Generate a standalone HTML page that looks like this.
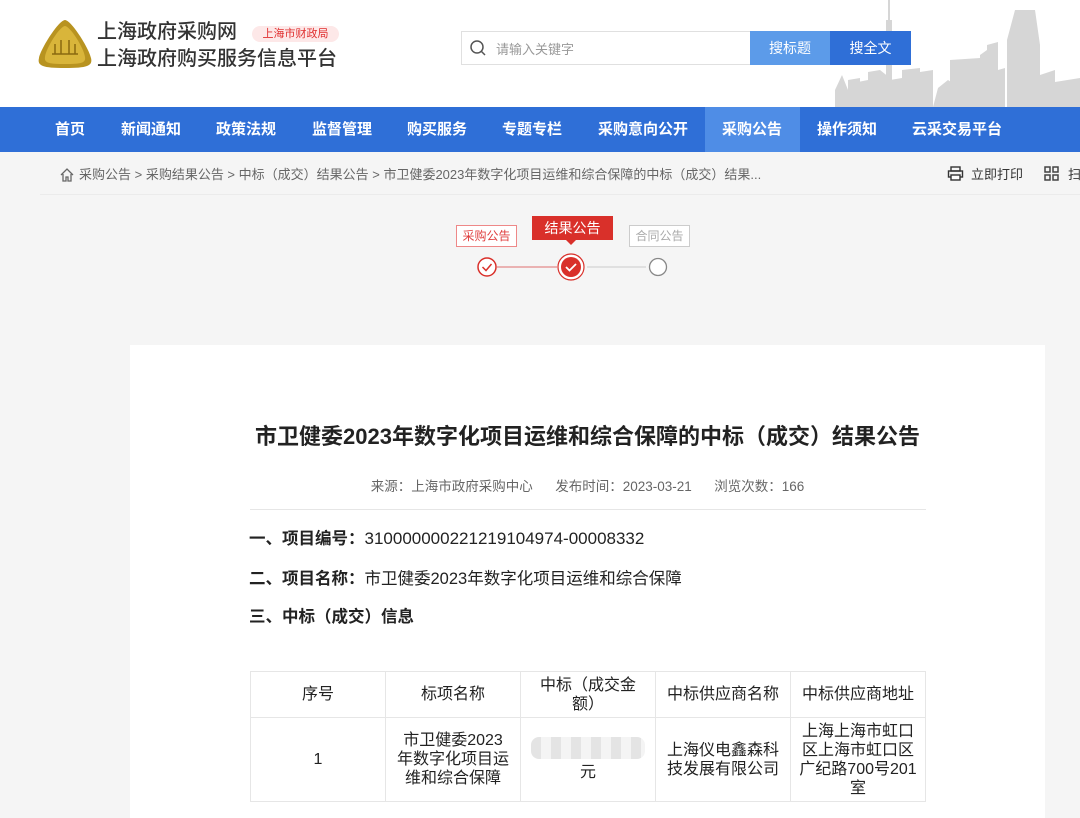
<!DOCTYPE html>
<html><head><meta charset="utf-8"><style>
*{margin:0;padding:0;box-sizing:border-box}
body{width:1080px;height:818px;overflow:hidden;background:#f5f5f5;font-family:"Liberation Sans","Noto Sans CJK SC",sans-serif;color:#222;position:relative}
.a{position:absolute;white-space:nowrap}
.nav{position:absolute;left:0;top:107px;width:1080px;height:45px;background:#2f6fd7}
.nav span{position:absolute;top:0;height:45px;line-height:45px;color:#fff;font-size:15px;font-weight:bold;transform:translateX(-50%)}
table{border-collapse:collapse;position:absolute;left:250px;top:671px;width:676px;background:#fff;table-layout:fixed}
td{border:1px solid #e6e6e6;text-align:center;font-size:16px;width:135px;padding:0 10px;line-height:19px;color:#222}
</style></head><body>
<div class="a" style="left:0;top:0;width:1080px;height:107px;background:#fff"></div>
<svg class="a" style="left:830px;top:0" width="250" height="107" viewBox="0 0 250 107"><g fill="#d6d6d6">
<rect x="58" y="0" width="2" height="20"/><rect x="56" y="20" width="6" height="87"/>
<path d="M5 107V90L12 75L18 90V80L30 78V107ZM28 107V82L38 80V72L50 70L60 78V107ZM60 107V80L72 78V70L90 68V107ZM90 107V72L103 70V107ZM103 107L108 88L118 80L130 88V107ZM120 107V60L150 58V107ZM150 107V55L157 50V45L168 42V107ZM168 107V70L175 68V107ZM177 107V40L185 10H205L210 45V107ZM210 107V75L225 70V107ZM225 107V82L250 78V107Z"/></g></svg>
<svg class="a" style="left:37px;top:18px" width="56" height="52" viewBox="0 0 56 52"><path d="M28 2C34 2 52 30 54 40C56 48 50 50 28 50C6 50 0 48 2 40C4 30 22 2 28 2Z" fill="#b89320"/><path d="M28 8C33 8 47 30 48 39C49 45 44 46 28 46C12 46 7 45 8 39C9 30 23 8 28 8Z" fill="#d9b53a"/><g stroke="#8a6a10" stroke-width="1.5" fill="none"><path d="M15 36H41M18 36V26M24 36V22M32 36V22M38 36V26"/></g></svg>
<div class="a" style="left:97px;top:20px;font-size:20px;color:#333;line-height:24px;font-weight:500">上海政府采购网</div>
<div class="a" style="left:252px;top:26px;width:87px;height:16px;border-radius:8px;background:#fde8e8;color:#e03030;font-size:11px;line-height:16px;text-align:center">上海市财政局</div>
<div class="a" style="left:97px;top:46px;font-size:20px;color:#333;line-height:26px;font-weight:500">上海政府购买服务信息平台</div>
<div class="a" style="left:461px;top:31px;width:290px;height:34px;border:1px solid #e0e0e0;background:#fff"></div>
<svg class="a" style="left:469px;top:39px" width="18" height="18" viewBox="0 0 18 18"><circle cx="8" cy="8" r="6" stroke="#555" stroke-width="1.5" fill="none"/><path d="M12.5 12.5L16 16" stroke="#555" stroke-width="1.5"/></svg>
<div class="a" style="left:496px;top:39px;font-size:13px;color:#999">请输入关键字</div>
<div class="a" style="left:750px;top:31px;width:80px;height:34px;background:#5c9be9;color:#fff;font-size:14px;line-height:34px;text-align:center">搜标题</div>
<div class="a" style="left:830px;top:31px;width:81px;height:34px;background:#2f6fd7;color:#fff;font-size:14px;line-height:34px;text-align:center">搜全文</div>
<div class="nav">
<div class="a" style="left:705px;top:0;width:95px;height:45px;background:#4f8de6"></div>
<span style="left:70px">首页</span><span style="left:151px">新闻通知</span><span style="left:246px">政策法规</span><span style="left:342px">监督管理</span><span style="left:437px">购买服务</span><span style="left:532px">专题专栏</span><span style="left:643px">采购意向公开</span><span style="left:752px">采购公告</span><span style="left:847px">操作须知</span><span style="left:957px">云采交易平台</span>
</div>
<svg class="a" style="left:59px;top:167px" width="16" height="16" viewBox="0 0 16 16"><path d="M2 8L8 2L14 8M4 7V14H7V10H9V14H12V7" stroke="#666" stroke-width="1.3" fill="none"/></svg>
<div class="a" style="left:79px;top:166px;font-size:13px;color:#666;line-height:18px">采购公告 &gt; 采购结果公告 &gt; 中标（成交）结果公告 &gt; 市卫健委2023年数字化项目运维和综合保障的中标（成交）结果...</div>
<svg class="a" style="left:947px;top:165px" width="17" height="17" viewBox="0 0 17 17"><g stroke="#333" stroke-width="1.4" fill="none"><rect x="4" y="2" width="9" height="4"/><rect x="1.5" y="6" width="14" height="6"/><rect x="4" y="10" width="9" height="5" fill="#fff"/></g></svg>
<div class="a" style="left:971px;top:166px;font-size:13px;color:#333;line-height:18px">立即打印</div>
<svg class="a" style="left:1044px;top:166px" width="15" height="15" viewBox="0 0 15 15"><g fill="none" stroke="#444" stroke-width="1.5"><rect x="1" y="1" width="5" height="5"/><rect x="9" y="1" width="5" height="5"/><rect x="1" y="9" width="5" height="5"/><rect x="9" y="9" width="5" height="5"/></g></svg>
<div class="a" style="left:1068px;top:166px;font-size:13px;color:#333;line-height:18px">扫</div>
<div class="a" style="left:40px;top:194px;width:1040px;height:1px;background:#ebebeb"></div>
<div class="a" style="left:456px;top:225px;width:61px;height:22px;border:1px solid #e88;color:#e04040;font-size:12px;line-height:20px;text-align:center;background:#fff">采购公告</div>
<div class="a" style="left:532px;top:216px;width:81px;height:24px;background:#d9302a;color:#fff;font-size:14px;line-height:24px;text-align:center">结果公告</div>
<div class="a" style="left:566px;top:240px;width:0;height:0;border-left:5px solid transparent;border-right:5px solid transparent;border-top:5px solid #d9302a"></div>
<div class="a" style="left:629px;top:225px;width:61px;height:22px;border:1px solid #ccc;color:#aaa;font-size:12px;line-height:20px;text-align:center;background:#fff">合同公告</div>
<svg class="a" style="left:470px;top:252px" width="200" height="30" viewBox="0 0 200 30"><line x1="27" y1="15" x2="87" y2="15" stroke="#e07070" stroke-width="1"/><line x1="117" y1="15" x2="176" y2="15" stroke="#ccc"/><circle cx="17" cy="15" r="9" fill="#fff" stroke="#d9302a" stroke-width="1.5"/><path d="M12.5 15L16 18.5L21.5 12" stroke="#d9302a" stroke-width="1.5" fill="none"/><circle cx="101" cy="15" r="13" fill="#fff" stroke="#d9302a" stroke-width="1.2"/><circle cx="101" cy="15" r="10" fill="#d9302a"/><path d="M96 15L99.5 18.5L106 12" stroke="#fff" stroke-width="1.8" fill="none"/><circle cx="188" cy="15" r="8.5" fill="#fff" stroke="#888" stroke-width="1.3"/></svg>
<div class="a" style="left:130px;top:345px;width:915px;height:473px;background:#fff"></div>
<div class="a" style="left:130px;top:422px;width:915px;text-align:center;font-size:22px;font-weight:bold;color:#222;line-height:30px">市卫健委2023年数字化项目运维和综合保障的中标（成交）结果公告</div>
<div class="a" style="left:130px;top:478px;width:915px;text-align:center;font-size:13.5px;color:#666;line-height:18px">来源：上海市政府采购中心&nbsp;&nbsp;&nbsp;&nbsp;&nbsp;&nbsp;发布时间：2023-03-21&nbsp;&nbsp;&nbsp;&nbsp;&nbsp;&nbsp;浏览次数：166</div>
<div class="a" style="left:250px;top:509px;width:676px;height:1px;background:#e6e6e6"></div>
<div class="a" style="left:249px;top:528px;font-size:16.5px;line-height:22px"><b>一、项目编号：</b><span style="font-size:17px">310000000221219104974-00008332</span></div>
<div class="a" style="left:249px;top:568px;font-size:16.5px;line-height:22px"><b>二、项目名称：</b>市卫健委2023年数字化项目运维和综合保障</div>
<div class="a" style="left:249px;top:606px;font-size:16.5px;line-height:22px"><b>三、中标（成交）信息</b></div>
<table>
<tr style="height:46px"><td>序号</td><td>标项名称</td><td>中标（成交金额）</td><td style="padding:0 4px">中标供应商名称</td><td style="padding:0 4px">中标供应商地址</td></tr>
<tr style="height:84px"><td>1</td><td>市卫健委2023年数字化项目运维和综合保障</td><td><div style="height:22px;margin:0 0 4px;background:repeating-linear-gradient(90deg,#e4e4e4 0 10px,#f4f4f4 10px 20px);border-radius:8px"></div>元</td><td>上海仪电鑫森科技发展有限公司</td><td style="word-break:break-all;padding:0 6px">上海上海市虹口区上海市虹口区广纪路700号201室</td></tr>
</table>
</body></html>
